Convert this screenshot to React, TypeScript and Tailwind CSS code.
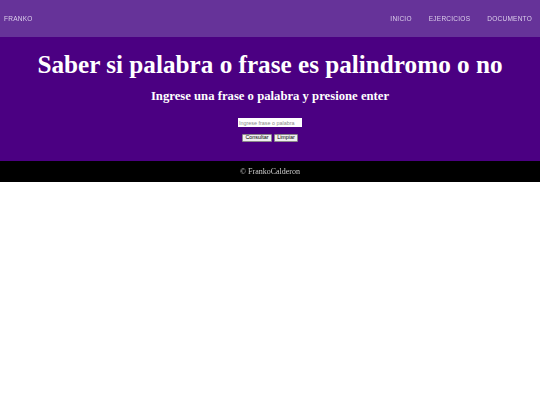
import React, { useState } from 'react';

export default function App() {
  const [texto, setTexto] = useState('');

  return (
    <div className="min-h-screen bg-white antialiased">
      {/* Navbar */}
      <header className="h-[37px] bg-[#663399] flex items-center justify-between pl-[4px] pr-[8px] font-['Liberation_Sans',Arial,sans-serif] text-[6.5px] tracking-[0.25px] text-[#ddd0ec] will-change-transform">
        <span>FRANKO</span>
        <nav className="flex items-center gap-[17px]">
          <a href="#">INICIO</a>
          <a href="#">EJERCICIOS</a>
          <a href="#">DOCUMENTO</a>
        </nav>
      </header>

      {/* Main */}
      <main className="bg-[#4b0082] text-white font-['Liberation_Serif','Times_New_Roman',serif] flex flex-col items-center pt-[13px] pb-[19px]">
        <h1 className="text-[25.2px] font-bold leading-[30px]">Saber si palabra o frase es palindromo o no</h1>
        <h2 className="text-[12.7px] font-bold leading-[16px] mt-[8px]">Ingrese una frase o palabra y presione enter</h2>
        <input
          value={texto}
          onChange={(e) => setTexto(e.target.value)}
          placeholder="Ingrese frase o palabra"
          className="mt-[14px] w-[64px] h-[9px] bg-white text-black text-[5.4px] px-[1px] font-['Liberation_Sans',Arial,sans-serif] placeholder:text-[#8a8a8a] outline-none"
        />
        <div className="mt-[7px] flex gap-[2px] font-['Liberation_Sans',Arial,sans-serif] text-[5.4px] text-black">
          <button className="w-[30px] h-[8px] px-0 flex items-center justify-center bg-[#f0f0f0] border border-[#8a8a8a] rounded-[1px] leading-none">Consultar</button>
          <button className="w-[24px] h-[8px] px-0 flex items-center justify-center bg-[#f0f0f0] border border-[#8a8a8a] rounded-[1px] leading-none" onClick={() => setTexto('')}>Limpiar</button>
        </div>
      </main>

      {/* Footer */}
      <footer className="h-[21px] bg-black flex items-center justify-center font-['Liberation_Serif','Times_New_Roman',serif] text-[8px] text-[#cccccc] will-change-transform">
        © FrankoCalderon
      </footer>
    </div>
  );
}
